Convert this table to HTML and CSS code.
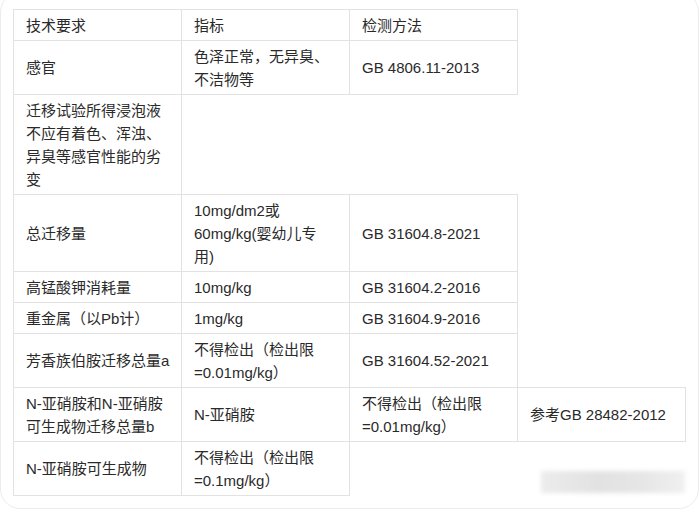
FILE: index.html
```html
<!DOCTYPE html>
<html lang="zh-CN">
<head>
    <meta charset="UTF-8">
    <title>技术要求</title>
    <link rel="stylesheet" href="styles.css">
</head>
<body>
<div class="card">
    <table class="spec-table">
        <colgroup>
            <col class="col">
            <col class="col">
            <col class="col">
            <col class="col">
        </colgroup>
        <tr>
            <td>技术要求</td>
            <td>指标</td>
            <td>检测方法</td>
        </tr>
        <tr>
            <td>感官</td>
            <td>色泽正常，无异臭、不洁物等</td>
            <td>GB 4806.11-2013</td>
        </tr>
        <tr>
            <td>迁移试验所得浸泡液不应有着色、浑浊、异臭等感官性能的劣变</td>
        </tr>
        <tr>
            <td>总迁移量</td>
            <td>10mg/dm2或<br>60mg/kg(婴幼儿专<br>用)</td>
            <td>GB 31604.8-2021</td>
        </tr>
        <tr>
            <td>高锰酸钾消耗量</td>
            <td>10mg/kg</td>
            <td>GB 31604.2-2016</td>
        </tr>
        <tr>
            <td>重金属（以Pb计）</td>
            <td>1mg/kg</td>
            <td>GB 31604.9-2016</td>
        </tr>
        <tr>
            <td>芳香族伯胺迁移总量a</td>
            <td>不得检出（检出限<br>=0.01mg/kg）</td>
            <td>GB 31604.52-2021</td>
        </tr>
        <tr>
            <td>N-亚硝胺和N-亚硝胺可生成物迁移总量b</td>
            <td>N-亚硝胺</td>
            <td>不得检出（检出限<br>=0.01mg/kg）</td>
            <td>参考GB 28482-2012</td>
        </tr>
        <tr>
            <td>N-亚硝胺可生成物</td>
            <td>不得检出（检出限<br>=0.1mg/kg）</td>
        </tr>
    </table>
    <div class="watermark"></div>
</div>
</body>
</html>
```

FILE: styles.css
```css
body {
    margin: 0;
    background-color: #fff;
    font-family: "Liberation Sans", "Noto Sans CJK SC", sans-serif;
    overflow: hidden;
}

.card {
    position: relative;
    margin: -8px 1px 0 0;
    height: 517px;
    padding: 16px 0 0 12px;
    box-sizing: border-box;
    border: 1px solid #ececec;
    border-radius: 20px;
}

.spec-table {
    border-collapse: collapse;
    table-layout: fixed;
    width: 672px;
    color: #2a2a2a;
    font-size: 15px;
    line-height: 23px;
}

.spec-table .col {
    width: 168px;
}

.spec-table td {
    padding: 3.5px 7px 3.5px 12px;
    border: 1px solid #e2e2e2;
    vertical-align: middle;
    text-align: left;
}

/* blurred watermark bottom right */
.watermark {
    position: absolute;
    left: 540px;
    top: 478px;
    width: 144px;
    height: 22px;
    background: linear-gradient(90deg, #ececec, #e2e2e2 40%, #e6e6e6 70%, #f0f0f0);
    filter: blur(2px);
}
```
